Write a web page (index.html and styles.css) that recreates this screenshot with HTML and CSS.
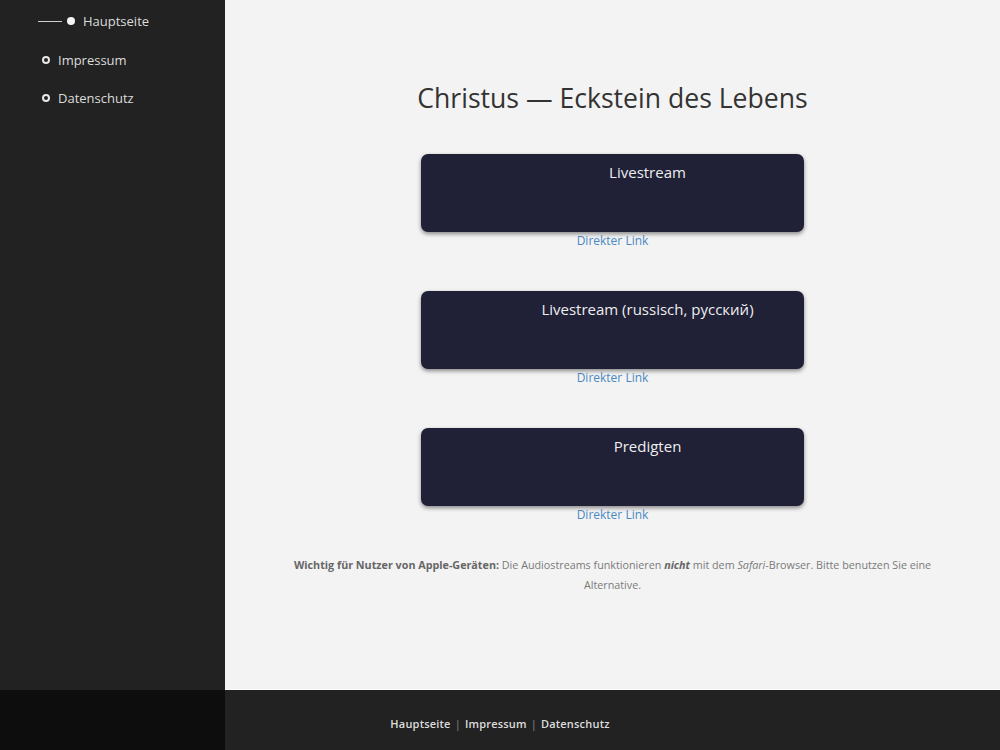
FILE: index.html
```html
<!DOCTYPE html>
<html lang="de">
<head>
<meta charset="utf-8">
<title>Christus — Eckstein des Lebens</title>
<link rel="stylesheet" href="styles.css">
</head>
<body>
<div class="page">
  <nav class="sidebar">
    <ul class="nav">
      <li class="nav-item active"><span class="line"></span><span class="dot"></span><a href="#">Hauptseite</a></li>
      <li class="nav-item"><span class="dot"></span><a href="#">Impressum</a></li>
      <li class="nav-item"><span class="dot"></span><a href="#">Datenschutz</a></li>
    </ul>
  </nav>
  <main class="main">
    <h1 class="title">Christus — Eckstein des Lebens</h1>
    <section class="stream">
      <div class="card"><div class="card-title">Livestream</div></div>
      <a class="direct" href="#">Direkter Link</a>
    </section>
    <section class="stream">
      <div class="card"><div class="card-title">Livestream (russisch, русский)</div></div>
      <a class="direct" href="#">Direkter Link</a>
    </section>
    <section class="stream">
      <div class="card"><div class="card-title">Predigten</div></div>
      <a class="direct" href="#">Direkter Link</a>
    </section>
    <p class="notice"><strong>Wichtig für Nutzer von Apple-Geräten:</strong> Die Audiostreams funktionieren <strong><em>nicht</em></strong> mit dem <em>Safari</em>-Browser. Bitte benutzen Sie eine Alternative.</p>
  </main>
  <div class="footer-side"></div>
  <footer class="footer">
    <a href="#">Hauptseite</a><span class="sep">|</span><a href="#">Impressum</a><span class="sep">|</span><a href="#">Datenschutz</a>
  </footer>
</div>
</body>
</html>
```
FILE: styles.css
```css
html, body {
  margin: 0;
  padding: 0;
}
body {
  font-family: "Open Sans", "Noto Sans", sans-serif;
  background: #f3f3f3;
}
.page {
  display: grid;
  grid-template-columns: 225px 1fr;
  grid-template-rows: 690px 60px;
  width: 1000px;
  height: 750px;
}
.sidebar {
  background: #222222;
}
.nav {
  list-style: none;
  margin: 0;
  padding: 11px 0 0 42px;
}
.nav-item {
  display: flex;
  align-items: center;
  height: 20px;
  margin-bottom: 18.5px;
  font-size: 13px;
}
.nav-item a {
  color: #dcdcdc;
  text-decoration: none;
}
.nav-item .dot {
  width: 4px;
  height: 4px;
  border: 2px solid #e8e8e8;
  border-radius: 50%;
  margin-right: 8px;
  flex: none;
}
.nav-item.active {
  margin-left: -4px;
}
.nav-item.active .line {
  width: 24px;
  height: 1px;
  background: #cfcfcf;
  margin-right: 5px;
}
.nav-item.active .dot {
  width: 8px;
  height: 8px;
  border: 0;
  background: #f4f4f4;
  margin-right: 8px;
}
.main {
  background: #f3f3f3;
  border-bottom: 1px solid #ffffff;
  display: flex;
  flex-direction: column;
  align-items: center;
  padding-top: 81px;
  box-sizing: border-box;
}
.title {
  margin: 0;
  font-size: 26.6px;
  line-height: 34px;
  font-weight: 400;
  color: #333333;
}
.stream {
  display: flex;
  flex-direction: column;
  align-items: center;
  margin-top: 39px;
}
.stream + .stream {
  margin-top: 42px;
}
.card {
  width: 383px;
  height: 78px;
  box-sizing: border-box;
  background: #202037;
  border-radius: 7px;
  box-shadow: 0 2px 4px rgba(0, 0, 0, 0.45);
  padding: 7px 0 0 70px;
}
.card-title {
  text-align: center;
  color: #eeeeee;
  font-size: 15px;
  line-height: 22px;
}
.direct {
  color: #4a88c2;
  font-size: 12px;
  line-height: 17px;
  text-decoration: none;
}
.notice {
  width: 660px;
  margin: 32px 0 0;
  text-align: center;
  font-size: 10.75px;
  line-height: 20px;
  color: #7a7a7a;
}
.notice strong {
  color: #666666;
}
.footer-side {
  background: #0d0d0d;
}
.footer {
  background: #222222;
  display: flex;
  justify-content: center;
  align-items: center;
  padding: 6px 225px 0 0;
  font-size: 11px;
  font-weight: 600;
  letter-spacing: 0.2px;
}
.footer a {
  color: #dddddd;
  text-decoration: none;
}
.footer .sep {
  color: #8a8a8a;
  margin: 0 4px;
  font-weight: 400;
}
```
